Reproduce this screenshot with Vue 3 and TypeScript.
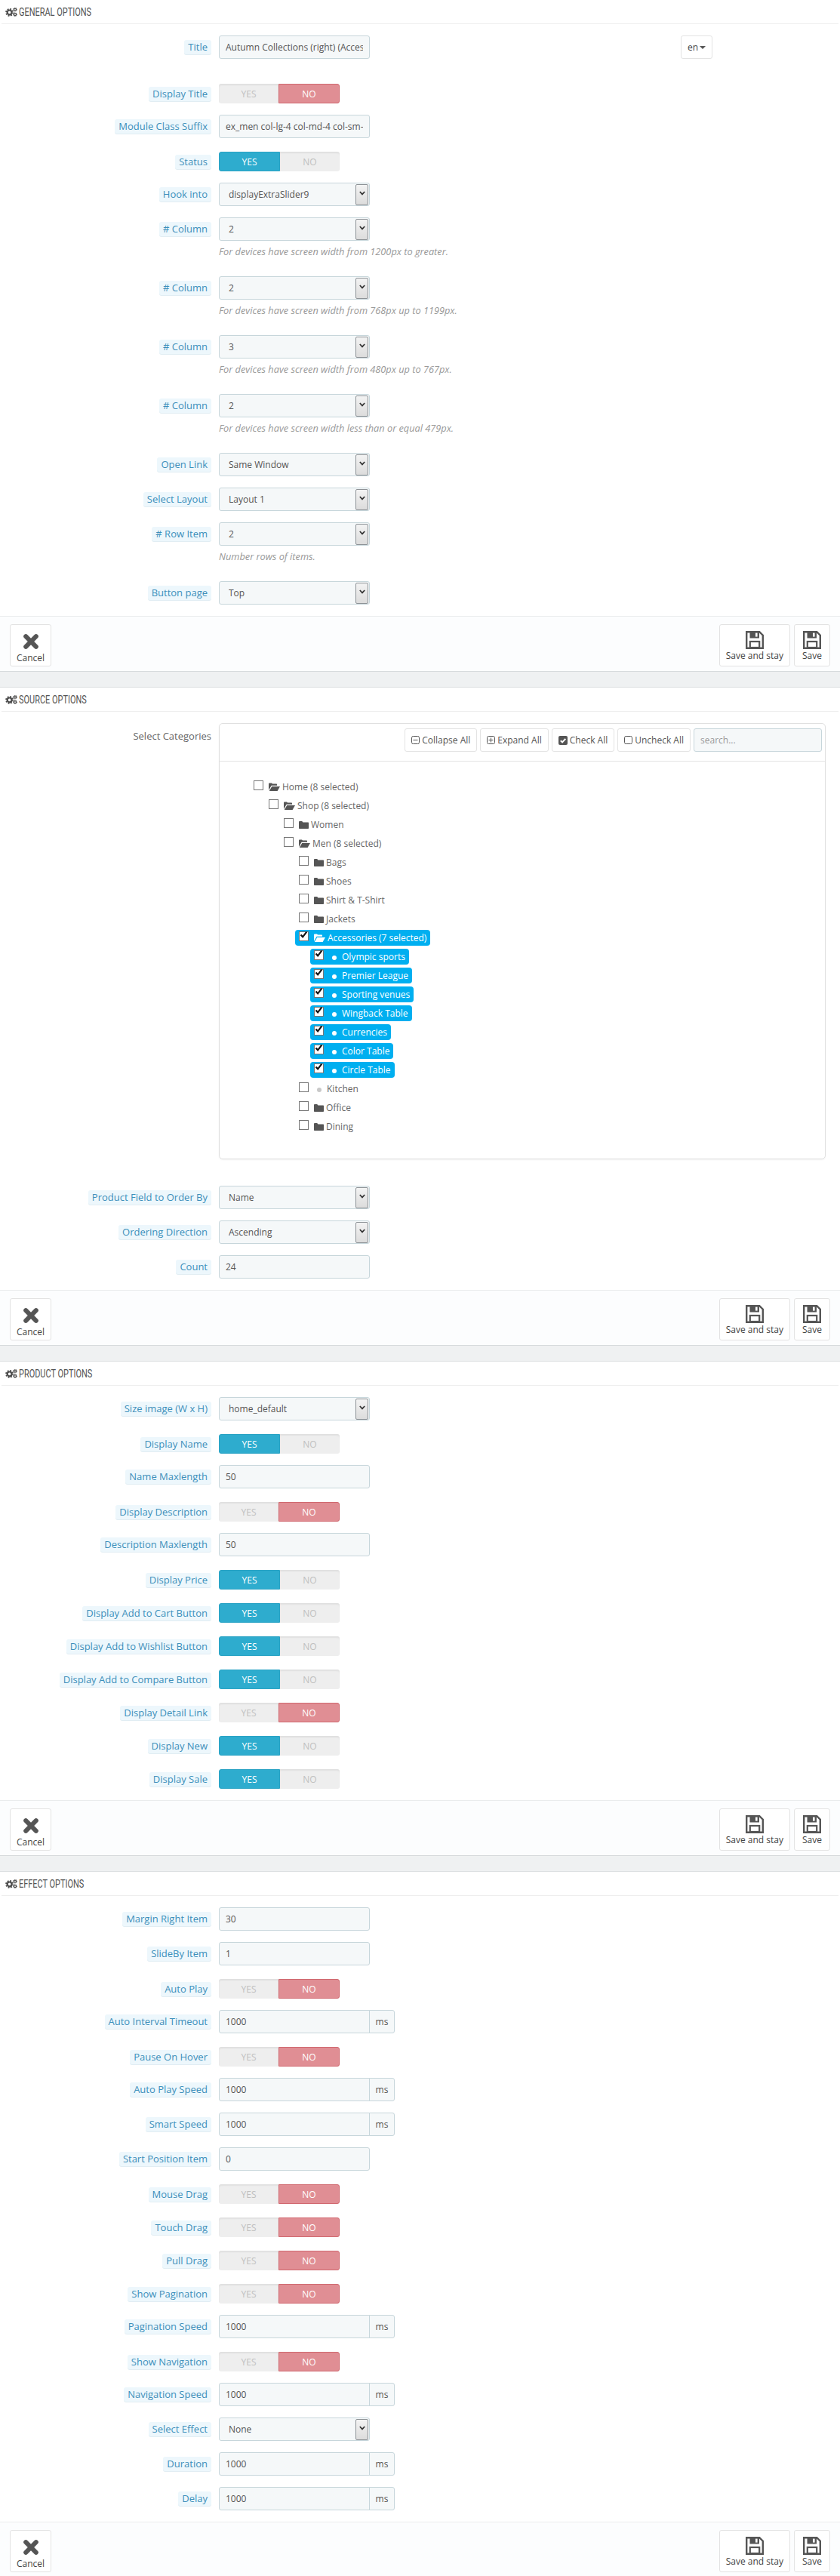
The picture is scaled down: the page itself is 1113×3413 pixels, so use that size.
<script setup lang="ts">
type Kind = 'input' | 'select' | 'group' | 'switch'
interface Field {
  label: string
  kind: Kind
  value?: string
  on?: boolean
  help?: string
}
interface TreeNode {
  name: string
  level: number
  icon: 'open' | 'closed' | 'dot'
  selected?: boolean
}

const inp = (label: string, value: string): Field => ({ label, kind: 'input', value })
const sel = (label: string, value: string, help?: string): Field => ({ label, kind: 'select', value, help })
const grp = (label: string, value = '1000'): Field => ({ label, kind: 'group', value })
const sw = (label: string, on: boolean): Field => ({ label, kind: 'switch', on })

const general: Field[] = [
  sw('Display Title', false),
  inp('Module Class Suffix', 'ex_men col-lg-4 col-md-4 col-sm-4 col-xs-12'),
  sw('Status', true),
  sel('Hook into', 'displayExtraSlider9'),
  sel('# Column', '2', 'For devices have screen width from 1200px to greater.'),
  sel('# Column', '2', 'For devices have screen width from 768px up to 1199px.'),
  sel('# Column', '3', 'For devices have screen width from 480px up to 767px.'),
  sel('# Column', '2', 'For devices have screen width less than or equal 479px.'),
  sel('Open Link', 'Same Window'),
  sel('Select Layout', 'Layout 1'),
  sel('# Row Item', '2', 'Number rows of items.'),
  sel('Button page', 'Top'),
]
const source: Field[] = [
  sel('Product Field to Order By', 'Name'),
  sel('Ordering Direction', 'Ascending'),
  inp('Count', '24'),
]
const product: Field[] = [
  sel('Size image (W x H)', 'home_default'),
  sw('Display Name', true),
  inp('Name Maxlength', '50'),
  sw('Display Description', false),
  inp('Description Maxlength', '50'),
  sw('Display Price', true),
  sw('Display Add to Cart Button', true),
  sw('Display Add to Wishlist Button', true),
  sw('Display Add to Compare Button', true),
  sw('Display Detail Link', false),
  sw('Display New', true),
  sw('Display Sale', true),
]
const effect: Field[] = [
  inp('Margin Right Item', '30'),
  inp('SlideBy Item', '1'),
  sw('Auto Play', false),
  grp('Auto Interval Timeout'),
  sw('Pause On Hover', false),
  grp('Auto Play Speed'),
  grp('Smart Speed'),
  inp('Start Position Item', '0'),
  sw('Mouse Drag', false),
  sw('Touch Drag', false),
  sw('Pull Drag', false),
  sw('Show Pagination', false),
  grp('Pagination Speed'),
  sw('Show Navigation', false),
  grp('Navigation Speed'),
  sel('Select Effect', 'None'),
  grp('Duration'),
  grp('Delay'),
]

const tree: TreeNode[] = [
  { name: 'Home (8 selected)', level: 0, icon: 'open' },
  { name: 'Shop (8 selected)', level: 1, icon: 'open' },
  { name: 'Women', level: 2, icon: 'closed' },
  { name: 'Men (8 selected)', level: 2, icon: 'open' },
  { name: 'Bags', level: 3, icon: 'closed' },
  { name: 'Shoes', level: 3, icon: 'closed' },
  { name: 'Shirt & T-Shirt', level: 3, icon: 'closed' },
  { name: 'Jackets', level: 3, icon: 'closed' },
  { name: 'Accessories (7 selected)', level: 3, icon: 'open', selected: true },
  { name: 'Olympic sports', level: 4, icon: 'dot', selected: true },
  { name: 'Premier League', level: 4, icon: 'dot', selected: true },
  { name: 'Sporting venues', level: 4, icon: 'dot', selected: true },
  { name: 'Wingback Table', level: 4, icon: 'dot', selected: true },
  { name: 'Currencies', level: 4, icon: 'dot', selected: true },
  { name: 'Color Table', level: 4, icon: 'dot', selected: true },
  { name: 'Circle Table', level: 4, icon: 'dot', selected: true },
  { name: 'Kitchen', level: 3, icon: 'dot' },
  { name: 'Office', level: 3, icon: 'closed' },
  { name: 'Dining', level: 3, icon: 'closed' },
]

const sections: { title: string; fields: Field[]; id: string }[] = [
  { id: 'general', title: 'General Options', fields: general },
  { id: 'source', title: 'Source Options', fields: source },
  { id: 'product', title: 'Product Options', fields: product },
  { id: 'effect', title: 'Effect Options', fields: effect },
]
</script>

<template>
  <div class="page">
    <section v-for="s in sections" :key="s.id" class="panel">
      <header class="phead">
        <svg class="gears" viewBox="0 0 16 12" width="16" height="12">
          <g fill="none" stroke="#4d4d4d">
            <circle cx="5.6" cy="6.4" r="2.9" stroke-width="2.2" />
            <circle cx="5.6" cy="6.4" r="4.5" stroke-width="1.8" stroke-dasharray="1.9 1.63" />
            <circle cx="13" cy="2.6" r="1.5" stroke-width="1.3" />
            <circle cx="13" cy="2.6" r="2.4" stroke-width="1" stroke-dasharray="1 .88" />
            <circle cx="13" cy="9.2" r="1.5" stroke-width="1.3" />
            <circle cx="13" cy="9.2" r="2.4" stroke-width="1" stroke-dasharray="1 .88" />
          </g>
        </svg>
        <span class="ptitle">{{ s.title }}</span>
      </header>

      <div class="pbody">
        <div v-if="s.id === 'general'" class="row title-row">
          <div class="labcol"><span class="chip">Title</span></div>
          <div class="ctl input"><span class="clip">Autumn Collections (right) (Accessories)</span></div>
          <div class="lang">en<i class="caret"></i></div>
        </div>

        <div v-if="s.id === 'source'" class="row cat-row">
          <div class="labcol"><span class="plain">Select Categories</span></div>
          <div class="tree">
            <div class="thead">
              <div class="tbtn">
                <svg width="11" height="11" viewBox="0 0 11 11"><rect x=".5" y=".5" width="10" height="10" rx="2" fill="none" stroke="#555" /><path d="M2.5 5.5h6" stroke="#555" /></svg>
                Collapse All
              </div>
              <div class="tbtn">
                <svg width="11" height="11" viewBox="0 0 11 11"><rect x=".5" y=".5" width="10" height="10" rx="2" fill="none" stroke="#555" /><path d="M2.5 5.5h6M5.5 2.5v6" stroke="#555" /></svg>
                Expand All
              </div>
              <div class="tbtn">
                <svg width="12" height="12" viewBox="0 0 12 12"><rect width="12" height="12" rx="2" fill="#555" /><path d="M2.8 6.2l2.3 2.2 4.2-4.6" fill="none" stroke="#fff" stroke-width="2" /></svg>
                Check All
              </div>
              <div class="tbtn">
                <svg width="11" height="11" viewBox="0 0 11 11"><rect x=".5" y=".5" width="10" height="10" rx="2" fill="none" stroke="#555" /></svg>
                Uncheck All
              </div>
              <div class="tsearch">search...</div>
            </div>
            <ul class="tlist">
              <li
                v-for="n in tree"
                :key="n.name"
                class="tnode"
                :class="['lv' + n.level, { on: n.selected }]"
              >
                <span class="tpill">
                  <span class="cb">
                    <svg v-if="n.selected" width="11" height="11" viewBox="0 0 11 11"><path d="M1.5 5.5l2.6 2.8L9.3 1.6" fill="none" stroke="#111" stroke-width="2.2" /></svg>
                  </span>
                  <svg v-if="n.icon === 'open'" class="ti open" width="15" height="11" viewBox="0 0 15 11">
                    <path d="M0 10V1.5C0 .8.5.4 1 .4h3l1 1.2h5c.6 0 1 .4 1 1V3.8H3.6L0 10zM4.2 5H15l-3.4 6H.8z" fill="currentColor" />
                  </svg>
                  <svg v-else-if="n.icon === 'closed'" class="ti closed" width="13" height="10" viewBox="0 0 13 10">
                    <path d="M0 1.2C0 .5.5 0 1.2 0h3l1.2 1.4H12c.6 0 1 .4 1 1V9c0 .6-.4 1-1 1H1c-.6 0-1-.4-1-1z" fill="currentColor" />
                  </svg>
                  <i v-else class="ti dot"></i>
                  <span class="tname">{{ n.name }}</span>
                </span>
              </li>
            </ul>
          </div>
        </div>

        <div v-for="(f, i) in s.fields" :key="s.id + i" class="row" :class="{ sw: f.kind === 'switch' }">
          <div class="labcol"><span class="chip">{{ f.label }}</span></div>

          <div v-if="f.kind === 'input'" class="ctl input"><span class="clip">{{ f.value }}</span></div>

          <div v-else-if="f.kind === 'group'" class="igroup">
            <div class="ctl input joined"><span class="clip">{{ f.value }}</span></div>
            <span class="addon">ms</span>
          </div>

          <div v-else-if="f.kind === 'select'" class="selwrap">
            <div class="ctl select">
              <span class="clip">{{ f.value }}</span>
              <span class="arrow">
                <svg width="8" height="6" viewBox="0 0 8 6"><path d="M.8 1l3.2 3.4L7.2 1" fill="none" stroke="#333" stroke-width="1.7" /></svg>
              </span>
            </div>
            <p v-if="f.help" class="help">{{ f.help }}</p>
          </div>

          <div v-else class="switch">
            <span class="seg" :class="{ yes: f.on }">YES</span>
            <span class="seg" :class="{ no: !f.on }">NO</span>
          </div>
        </div>
      </div>

      <footer class="pfoot">
        <div class="fbtn cancel">
          <svg width="20" height="20" viewBox="0 0 20 20"><path d="M3.2 3.2l13.6 13.6M16.8 3.2L3.2 16.8" stroke="#555" stroke-width="6" stroke-linecap="round" /></svg>
          <span>Cancel</span>
        </div>
        <div class="fright">
          <div v-for="b in ['Save and stay', 'Save']" :key="b" class="fbtn">
            <svg width="24" height="24" viewBox="0 0 24 24">
              <path d="M1.2 1.2H18.3L22.8 5.7V22.8H1.2Z" fill="none" stroke="#555" stroke-width="2.4" />
              <path d="M5.5 1.2H18V9.5H5.5Z" fill="#555" />
              <rect x="13" y="2.6" width="2.6" height="5" fill="#fff" />
              <rect x="5.8" y="14" width="12.4" height="8" fill="none" stroke="#555" stroke-width="2.2" />
            </svg>
            <span>{{ b }}</span>
          </div>
        </div>
      </footer>
    </section>
  </div>
</template>

<style>
html,
body {
  margin: 0;
  background: #fff;
}
</style>

<style scoped>
.page {
  width: 1113px;
  height: 3413px;
  overflow: hidden;
  background: #eff1f2;
  font-family: "Open Sans", "Liberation Sans", sans-serif;
  font-size: 12px;
  color: #555;
  display: flex;
  flex-direction: column;
  gap: 20px;
}
.panel {
  background: #fff;
  flex: none;
}
.panel + .panel {
  border-top: 1px solid #dcdfe1;
}
.phead {
  height: 31px;
  margin: 0 2px;
  border-bottom: 1px solid #eeeeee;
  display: flex;
  align-items: center;
  padding-left: 5px;
  box-sizing: content-box;
}
.gears {
  flex: none;
  margin-right: 2px;
}
.ptitle {
  display: inline-block;
  font-family: "Roboto", "Liberation Sans", sans-serif;
  font-size: 15px;
  text-transform: uppercase;
  transform: scaleX(0.73);
  transform-origin: left center;
  white-space: nowrap;
  color: #555;
}
.pbody {
  padding-top: 15px;
}
.row {
  display: flex;
  align-items: flex-start;
  margin-bottom: 15px;
}
.row.sw {
  margin-top: 18px;
  margin-bottom: 0;
  padding-bottom: 15px;
}
.row.sw + .row.sw {
  margin-top: 3px;
}
.row:first-child.sw {
  margin-top: 3px;
}
.row:not(.sw) + .row.sw {
  margin-top: -12px;
  padding-top: 15px;
}
.row.title-row {
  margin-bottom: 30px;
}
.row.cat-row {
  margin-bottom: 35px;
}
.labcol {
  width: 280px;
  height: 31px;
  flex: none;
  margin-right: 10px;
  display: flex;
  justify-content: flex-end;
  align-items: center;
}
.sw .labcol {
  height: 26px;
}
.chip {
  display: inline-block;
  padding: 0 5px;
  height: 19px;
  line-height: 19px;
  border-radius: 3px;
  background: #edf7fc;
  box-shadow: 0 1px 0 #e1edf3;
  color: #3c8fbb;
  font-size: 13px;
  white-space: nowrap;
}
.plain {
  color: #666;
  font-size: 13px;
  align-self: flex-start;
  line-height: 34px;
}
.ctl {
  box-sizing: border-box;
  width: 200px;
  height: 31px;
  border: 1px solid #c7d6db;
  border-radius: 3px;
  background: #f5f8f9;
  color: #555;
  font-size: 12px;
  display: flex;
  align-items: center;
}
.input {
  padding: 0 8px;
}
.clip {
  display: block;
  flex: 1;
  min-width: 0;
  overflow: hidden;
  white-space: nowrap;
  line-height: 20px;
}
.select {
  padding-left: 12px;
  position: relative;
}
.arrow {
  flex: none;
  box-sizing: border-box;
  width: 17px;
  height: 28px;
  margin-left: 5px;
  margin-right: 1px;
  border: 1px solid #8d9296;
  border-radius: 2px;
  background: linear-gradient(#f3f3f3, #dcdcdc);
  display: flex;
  align-items: center;
  justify-content: center;
  padding-bottom: 3px;
}
.selwrap {
  width: 200px;
}
.help {
  margin: 5px 0 9px;
  width: 420px;
  line-height: 18px;
  font-size: 12.75px;
  font-style: italic;
  color: #999;
}
.igroup {
  display: flex;
}
.joined {
  border-top-right-radius: 0;
  border-bottom-right-radius: 0;
}
.addon {
  box-sizing: border-box;
  width: 34px;
  height: 31px;
  margin-left: -1px;
  border: 1px solid #c7d6db;
  border-radius: 0 3px 3px 0;
  background: #f5f8f9;
  display: flex;
  align-items: center;
  justify-content: center;
  font-size: 12px;
  color: #555;
}
.switch {
  width: 160px;
  height: 26px;
  display: flex;
  font-size: 12px;
}
.seg {
  box-sizing: border-box;
  flex: 1;
  display: flex;
  align-items: center;
  justify-content: center;
  background: #eeeeee;
  color: #c0c0c0;
  box-shadow: inset 0 2px 2px rgba(0, 0, 0, 0.06);
  border-radius: 0 3px 3px 0;
}
.seg:first-child {
  border-radius: 3px 0 0 3px;
}
.seg.yes {
  background: #2eacce;
  color: #fff;
  box-shadow: none;
  border: 1px solid #2aa3c4;
}
.seg.no {
  background: #e08e94;
  color: #fff;
  box-shadow: none;
  border: 1px solid #d0686f;
}
.lang {
  box-sizing: border-box;
  width: 42px;
  height: 31px;
  margin-left: 412px;
  border: 1px solid #e3e3e3;
  border-radius: 3px;
  display: flex;
  align-items: center;
  justify-content: center;
  gap: 2px;
  font-size: 12px;
  color: #444;
}
.caret {
  width: 0;
  height: 0;
  border-left: 4px solid transparent;
  border-right: 4px solid transparent;
  border-top: 4px solid #555;
}
.tree {
  box-sizing: border-box;
  width: 804px;
  height: 578px;
  border: 1px solid #dfdfdf;
  border-radius: 5px;
  box-shadow: 0 1px 2px rgba(0, 0, 0, 0.05);
}
.thead {
  height: 50px;
  box-sizing: border-box;
  border-bottom: 1px solid #e3e3e3;
  padding: 6px 4px 0 0;
  display: flex;
  justify-content: flex-end;
  gap: 4px;
}
.tbtn {
  box-sizing: border-box;
  height: 31px;
  border: 1px solid #e3e3e3;
  border-radius: 3px;
  padding: 0 8px;
  display: flex;
  align-items: center;
  gap: 3px;
  font-size: 12px;
  color: #555;
  white-space: nowrap;
}
.tsearch {
  box-sizing: border-box;
  width: 170px;
  height: 31px;
  border: 1px solid #c7d6db;
  border-radius: 3px;
  background: #f5f8f9;
  color: #999;
  padding: 0 8px;
  line-height: 29px;
}
.tlist {
  list-style: none;
  margin: 0;
  padding: 23px 0 0 40px;
}
.tnode {
  height: 25px;
  color: #666;
}
.lv1 { padding-left: 20px; }
.lv2 { padding-left: 40px; }
.lv3 { padding-left: 60px; }
.lv4 { padding-left: 80px; }
.tpill {
  display: inline-flex;
  align-items: center;
  height: 21px;
  padding: 0 5px;
  border-radius: 4px;
  white-space: nowrap;
  font-size: 12px;
  position: relative;
}
.on .tpill {
  background: #00aff0;
  color: #fff;
}
.cb {
  box-sizing: border-box;
  width: 13px;
  height: 13px;
  flex: none;
  border: 1px solid #767676;
  background: #fff;
  margin-right: 7px;
  position: relative;
  top: -2px;
}
.cb svg {
  position: absolute;
  left: 0;
  top: -2px;
}
.ti {
  flex: none;
  color: #555;
}
.on .ti {
  color: #fff;
}
.ti.open {
  margin-right: 3px;
}
.ti.closed {
  margin-right: 3px;
}
.ti.dot {
  width: 6px;
  height: 6px;
  border-radius: 50%;
  background: #c9c9c9;
  margin: 2px 7px 0 4px;
}
.on .ti.dot {
  background: #fff;
}
.pfoot {
  box-sizing: border-box;
  height: 74px;
  padding: 10px 13px 6px;
  border-top: 1px solid #eaeced;
  border-bottom: 1px solid #d6dadc;
  background: #fcfdfe;
  display: flex;
  justify-content: space-between;
}
.fright {
  display: flex;
  gap: 5px;
}
.fbtn {
  box-sizing: border-box;
  height: 56px;
  min-width: 48px;
  padding: 8px 8px 0;
  border: 1px solid #e3e3e3;
  border-radius: 3px;
  background: #fff;
  display: flex;
  flex-direction: column;
  align-items: center;
  font-size: 12px;
  line-height: 18px;
  color: #444;
  white-space: nowrap;
}
.cancel {
  width: 55px;
  padding-top: 12px;
}
.cancel span {
  margin-top: 3px;
}
.fbtn svg {
  flex: none;
}
</style>
